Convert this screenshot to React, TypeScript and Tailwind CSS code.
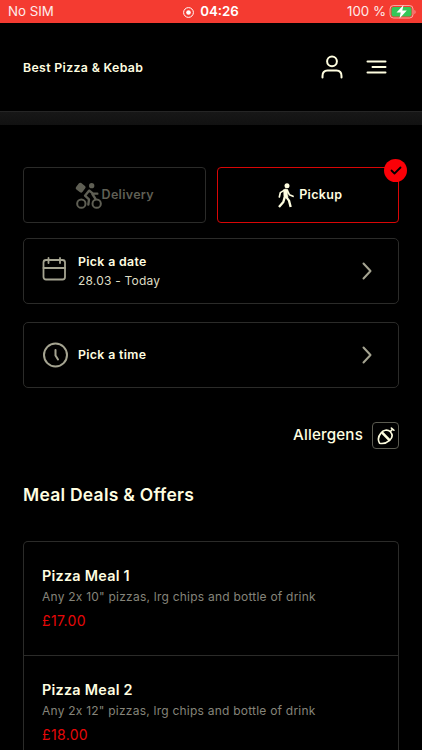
import React from "react";

const meals = [
  {
    title: "Pizza Meal 1",
    description: 'Any 2x 10" pizzas, lrg chips and bottle of drink',
    price: "£17.00",
  },
  {
    title: "Pizza Meal 2",
    description: 'Any 2x 12" pizzas, lrg chips and bottle of drink',
    price: "£18.00",
  },
];

const BatteryIcon = () => (
  <svg width="28" height="16" viewBox="0 0 28 16" fill="none">
    <rect x="1" y="1.500" width="23" height="12.500" rx="3.5" stroke="#fff" strokeOpacity=".55" />
    <rect x="2.5" y="3" width="20" height="9.500" rx="2" fill="#34c759" />
    <path d="M25.5 6v4c1.300-.4 1.300-3.600 0-4z" fill="#fff" fillOpacity=".55" />
    <path d="M14.500 1 7.500 8.600h4.200l-1.200 5.900 7.300-7.900h-4.500z" fill="#fff" />
  </svg>
);

const RiderIcon = () => (
  <svg width="27" height="27" viewBox="0 0 81 81" fill="none" stroke="currentColor">
    <rect x="5" y="5" width="24" height="24" rx="5" transform="rotate(38 17 17)" fill="currentColor" stroke="none" />
    <circle cx="50" cy="11" r="8" fill="currentColor" stroke="none" />
    <circle cx="19" cy="65" r="12.500" strokeWidth="6" />
    <circle cx="65" cy="65" r="12.500" strokeWidth="6" />
    <path d="M42 26 30 41l12 11-2 16M43 26l11 9h13M52 36l9 14" strokeWidth="7" strokeLinecap="round" strokeLinejoin="round" />
  </svg>
);

const WalkIcon = () => (
  <svg width="16" height="25" viewBox="0 0 48 75" fill="none" stroke="currentColor">
    <circle cx="27" cy="8" r="7.500" fill="currentColor" stroke="none" />
    <path d="M17 20q6-4 12 0l-1 14 2 9-12 1z" fill="currentColor" strokeWidth="2" strokeLinejoin="round" />
    <path d="M18 22 7 29 4 42M28 22l6 13 11 5" strokeWidth="5" strokeLinecap="round" strokeLinejoin="round" />
    <path d="m24 41 9 12 5 19M20 43l-4 14L3 72" strokeWidth="7" strokeLinejoin="round" />
  </svg>
);

const AcornIcon = () => (
  <svg width="18" height="18" viewBox="0 0 50 50" fill="none" stroke="currentColor" strokeWidth="4.500" strokeLinecap="round" strokeLinejoin="round">
    <path d="M11 17C17 8 29 6 37 13c7 8 6 17-2 24-9 8-19 10-28 8C2 36 4 25 11 17z" />
    <path d="m15 16 19 20" strokeWidth="7" />
    <path d="m38 12 5-6M40 3l7 6" />
  </svg>
);

const ChevronIcon = () => (
  <svg width="10" height="18" viewBox="0 0 10 18" fill="none" stroke="#a5a491" strokeWidth="2" strokeLinecap="round" strokeLinejoin="round">
    <path d="m1.500 1.500 7 7.500-7 7.500" />
  </svg>
);

const App = () => {
  return (
    <div className="h-[750px] w-full overflow-hidden bg-black font-['Inter',sans-serif] text-[#fffee0]">
      {/* --- Status bar --- */}
      <div className="grid h-[23px] grid-cols-3 items-center bg-[#f43b31] text-[13.300px] text-white">
        <span className="pl-2 pt-px opacity-90">No SIM</span>
        <div className="flex items-center justify-center gap-[6px] pt-px font-semibold">
          <svg width="11" height="11" viewBox="0 0 11 11" fill="none">
            <circle cx="5.500" cy="5.500" r="4.900" stroke="#fff" />
            <circle cx="5.500" cy="5.500" r="2.300" fill="#fff" />
          </svg>
          <span>04:26</span>
        </div>
        <div className="flex items-center justify-end gap-[3px] pr-[5px] pt-px">
          <span className="opacity-90">100 %</span>
          <BatteryIcon />
        </div>
      </div>

      {/* --- Header --- */}
      <header className="flex h-[88px] items-center justify-between pl-[23px] pr-[35px]">
        <h1 className="pt-[2px] text-[12.300px] font-semibold tracking-[0.350px]">Best Pizza &amp; Kebab</h1>
        <div className="flex items-center gap-[23px]">
          <svg width="22" height="24" viewBox="0 0 22 24" fill="none" stroke="currentColor" strokeWidth="2" strokeLinecap="round">
            <circle cx="11" cy="6.300" r="4.900" />
            <path d="M1.500 22.500V21c0-3.500 2-5.500 5-5.500h9c3 0 5 2 5 5.500v1.500" />
          </svg>
          <svg width="21" height="16" viewBox="0 0 21 16" fill="none" stroke="currentColor" strokeWidth="2" strokeLinecap="round">
            <path d="M1.500 2.500h18M6.500 8h13M1.500 13.500h18" />
          </svg>
        </div>
      </header>
      <div className="h-[14px] border-t border-[#252525] bg-linear-to-b from-[#171717] to-[#111111]" />

      <main className="px-[23px] pt-[42px]">
        {/* --- Order type --- */}
        <div className="grid h-[56px] grid-cols-2 gap-[11px] text-[12.500px] font-semibold tracking-[0.300px]">
          <button className="flex items-center justify-center rounded-[4px] border border-[#2b2b29] text-[#5f5f54]">
            <RiderIcon />
            <span>Delivery</span>
          </button>
          <button className="relative flex items-center justify-center gap-[5px] rounded-[4px] border border-[#d90606] pl-[5px]">
            <WalkIcon />
            <span>Pickup</span>
            <span className="absolute -right-[9px] -top-[9px] flex size-[23px] items-center justify-center rounded-full bg-[#fb0007]">
              <svg width="12" height="9" viewBox="0 0 12 9" fill="none" stroke="#000" strokeWidth="1.800" strokeLinecap="round" strokeLinejoin="round">
                <path d="m1.500 4.500 3 3 6-6" />
              </svg>
            </span>
          </button>
        </div>

        {/* --- Date and time --- */}
        <button className="mt-[15px] flex h-[66px] w-full items-center rounded-[5px] border border-[#2b2b29] pl-[18px] pr-[26px] text-left">
          <svg className="-mt-[5px]" width="26" height="26" viewBox="0 0 26 26" fill="none" stroke="#a5a491" strokeWidth="1.800" strokeLinecap="round">
            <rect x="1.500" y="4" width="21.500" height="19.500" rx="2.500" />
            <path d="M1.500 12H23M6.500 2v5M18 2v5" />
          </svg>
          <div className="ml-[10px] flex-1">
            <p className="text-[12.300px] font-semibold leading-[19px] tracking-[0.350px]">Pick a date</p>
            <p className="text-[12px] leading-[19px] tracking-[0.200px] text-[#deddc4]">28.03 - Today</p>
          </div>
          <ChevronIcon />
        </button>
        <button className="mt-[18px] flex h-[66px] w-full items-center rounded-[5px] border border-[#2b2b29] pl-[18px] pr-[26px] text-left">
          <svg width="28" height="28" viewBox="0 0 28 28" fill="none" stroke="#a5a491" strokeWidth="2" strokeLinecap="round">
            <circle cx="13.500" cy="14" r="11.500" />
            <path d="M13.500 9v5.500l2.500 4" />
          </svg>
          <p className="ml-2 flex-1 text-[12.300px] font-semibold tracking-[0.350px]">Pick a time</p>
          <ChevronIcon />
        </button>

        {/* --- Allergens --- */}
        <div className="mt-[34px] flex items-center justify-end gap-[9px]">
          <span className="text-[15.200px] font-medium tracking-[0.150px]">Allergens</span>
          <button className="flex size-[27px] items-center justify-center rounded-[4px] border border-[#5a5a50]">
            <AcornIcon />
          </button>
        </div>

        {/* --- Meal deals --- */}
        <h2 className="mt-[32px] text-[17.500px] font-semibold leading-7 tracking-[0.250px]">Meal Deals &amp; Offers</h2>
        <ul className="mt-[32px] rounded-t-[5px] border border-b-0 border-[#2b2b29]">
          {meals.map((meal) => (
            <li key={meal.title} className="h-[113.500px] border-b border-[#2b2b29] px-[18px] pt-[24px]">
              <h3 className="text-[14.400px] font-semibold leading-5 tracking-[0.250px]">{meal.title}</h3>
              <p className="text-[12px] leading-[21px] tracking-[0.230px] text-[#85847a]">{meal.description}</p>
              <p className="mt-[3px] text-[14px] leading-[22px] tracking-[0.350px] text-[#e60808]">{meal.price}</p>
            </li>
          ))}
        </ul>
      </main>
    </div>
  );
};

export default App;
